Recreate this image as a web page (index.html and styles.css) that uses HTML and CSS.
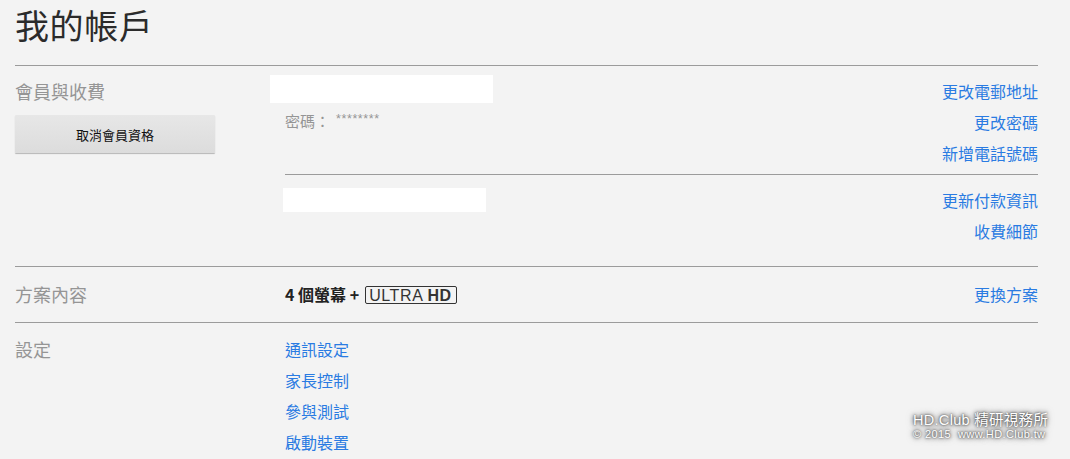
FILE: index.html
```html
<!DOCTYPE html>
<html lang="zh-Hant">
<head>
<meta charset="utf-8">
<title>我的帳戶</title>
<link rel="stylesheet" href="styles.css">
</head>
<body>
<div class="page">
  <h1 class="title">我的帳戶</h1>

  <section class="section sec-billing">
    <div class="label-col">
      <div class="label">會員與收費</div>
      <button class="btn">取消會員資格</button>
    </div>
    <div class="main-col">
      <div class="group group-a">
        <div class="info">
          <div class="blank blank-email"></div>
          <div class="pw"><span class="pw-label">密碼：</span><span class="pw-stars">********</span></div>
        </div>
        <div class="links">
          <a href="#">更改電郵地址</a>
          <a href="#">更改密碼</a>
          <a href="#">新增電話號碼</a>
        </div>
      </div>
      <div class="group group-b">
        <div class="info">
          <div class="blank blank-pay"></div>
        </div>
        <div class="links">
          <a href="#">更新付款資訊</a>
          <a href="#">收費細節</a>
        </div>
      </div>
    </div>
  </section>

  <section class="section sec-plan">
    <div class="label-col">
      <div class="label">方案內容</div>
    </div>
    <div class="main-col row">
      <div class="plan"><b>4 個螢幕 +</b> <span class="uhd">ULTRA <b>HD</b></span></div>
      <div class="links">
        <a href="#">更換方案</a>
      </div>
    </div>
  </section>

  <section class="section sec-settings">
    <div class="label-col">
      <div class="label">設定</div>
    </div>
    <div class="main-col">
      <div class="links left">
        <a href="#">通訊設定</a>
        <a href="#">家長控制</a>
        <a href="#">參與測試</a>
        <a href="#">啟動裝置</a>
      </div>
    </div>
  </section>
</div>

<div class="watermark">
  <div class="wm-1">HD.Club 精研視務所</div>
  <div class="wm-2">© 2015 &nbsp;www.HD.Club.tw</div>
</div>
</body>
</html>
```

FILE: styles.css
```css
html, body {
  margin: 0;
  padding: 0;
  background: #f3f3f3;
  overflow: hidden;
}
body {
  font-family: "Noto Sans CJK TC", "Noto Sans", sans-serif;
  color: #333;
  width: 1070px;
  height: 459px;
  position: relative;
}
.page {
  padding: 0 32px 0 15px;
}
.title {
  margin: 0;
  font-weight: 400;
  font-size: 34px;
  line-height: 50px;
  height: 50px;
  margin-bottom: 15px;
  color: #2b2b2b;
  letter-spacing: 0.6px;
}
.section {
  display: flex;
  border-top: 1px solid #9b9b9b;
}
.label-col {
  width: 255px;
  flex: none;
  padding-top: 10px;
}
.label {
  font-size: 18px;
  line-height: 31px;
  color: #959595;
}
.btn {
  display: block;
  margin-top: 8px;
  width: 200px;
  height: 38px;
  border: 0;
  border-radius: 1px;
  background: linear-gradient(#e7e7e7, #dcdcdc);
  box-shadow: 0 1px 1px rgba(0,0,0,0.25);
  font-family: inherit;
  font-size: 13px;
  color: #111;
  padding: 0;
  cursor: pointer;
}
.main-col {
  flex: 1;
  padding-left: 15px;
}
.group {
  display: flex;
  justify-content: space-between;
}
.group-a {
  padding-top: 10px;
  padding-bottom: 5px;
  border-bottom: 1px solid #9b9b9b;
}
.group-b {
  padding-top: 10px;
  padding-bottom: 19px;
}
.links {
  display: flex;
  flex-direction: column;
  align-items: flex-end;
}
.links.left {
  align-items: flex-start;
}
.links a {
  font-size: 16px;
  line-height: 31px;
  color: #2a7be2;
  text-decoration: none;
}
.blank {
  background: #fff;
}
.blank-email {
  width: 223px;
  height: 28px;
  margin-left: -15px;
  margin-top: -1px;
}
.blank-pay {
  width: 203px;
  height: 24px;
  margin-left: -2px;
  margin-top: 3px;
}
.pw {
  line-height: 31px;
  margin-top: 1px;
  color: #959595;
}
.pw-label {
  font-size: 15px;
}
.pw-stars {
  font-size: 12.5px;
  font-family: "Liberation Sans", sans-serif;
  vertical-align: 4px;
  margin-left: 6px;
  letter-spacing: 0.6px;
}
.sec-plan .label-col {
  padding-top: 12px;
}
.row {
  display: flex;
  justify-content: space-between;
  padding-top: 12px;
  padding-bottom: 12px;
}
.plan {
  font-size: 16px;
  line-height: 31px;
  color: #222;
  display: flex;
  align-items: center;
}
.plan b {
  font-weight: 700;
}
.uhd {
  display: inline-block;
  margin-left: 6px;
  border: 1px solid #333;
  border-radius: 2px;
  font-family: "Liberation Sans", sans-serif;
  font-size: 16px;
  line-height: 15px;
  padding: 1px 4px 0 3px;
  color: #333;
  letter-spacing: 0.6px;
}
.uhd b {
  font-weight: 700;
  letter-spacing: 0.4px;
}
.sec-settings .label-col {
  padding-top: 11px;
}
.sec-settings .main-col {
  padding-top: 11px;
}
.watermark {
  position: absolute;
  left: 913px;
  top: 413px;
  color: #fff;
  font-family: "Liberation Sans", "Noto Sans CJK TC", sans-serif;
  text-shadow: 0 0 2px #444, 0 0 4px #555, 0 0 7px #777;
  line-height: 1;
}
.wm-1 {
  font-size: 14.5px;
  letter-spacing: 0.3px;
}
.wm-2 {
  font-size: 11px;
  margin-top: 1px;
  letter-spacing: 0.4px;
}
```
